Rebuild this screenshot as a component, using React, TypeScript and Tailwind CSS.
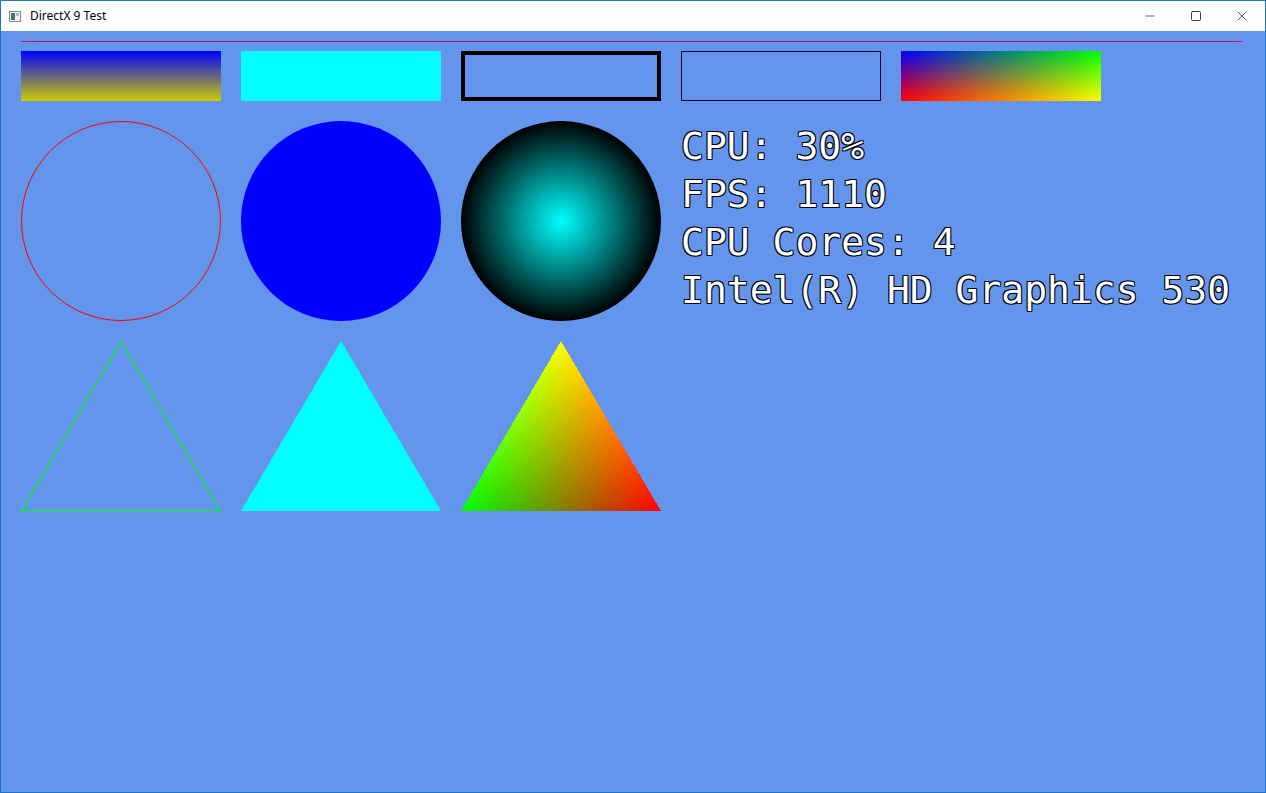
import { Minus, Square, X } from "lucide-react";

const stats = ["CPU: 30%", "FPS: 1110", "CPU Cores: 4", "Intel(R) HD Graphics 530"];

function AppIcon() {
  return (
    <svg width="12" height="11" viewBox="0 0 12 11">
      <rect x="0.5" y="0.5" width="11" height="10" fill="#f2f2f2" stroke="#8a8a8a" />
      <rect x="2" y="2" width="4" height="7" fill="#3d7a78" />
      <rect x="7" y="2" width="3" height="3" fill="#9fc3c0" />
    </svg>
  );
}

function TitleBar() {
  return (
    <div className="h-[30px] bg-white flex items-center shrink-0">
      <div className="ml-[8px] mr-[9px] flex items-center">
        <AppIcon />
      </div>
      <span className="text-[12px] text-black font-['Noto_Sans','Liberation_Sans',sans-serif]">
        DirectX 9 Test
      </span>
      <div className="ml-auto flex h-full">
        <div className="w-[46px] flex items-center justify-center">
          <Minus size={14} strokeWidth={1} color="#000" />
        </div>
        <div className="w-[46px] flex items-center justify-center">
          <Square size={12} strokeWidth={1.5} color="#000" />
        </div>
        <div className="w-[46px] flex items-center justify-center">
          <X size={16} strokeWidth={1} color="#000" />
        </div>
      </div>
    </div>
  );
}

function CornerGradientRect() {
  return (
    <svg width="200" height="50" viewBox="0 0 200 50">
      <defs>
        <linearGradient id="bottomRow" x1="0" y1="0" x2="1" y2="0">
          <stop offset="0" stopColor="#ff0000" />
          <stop offset="1" stopColor="#ffff00" />
        </linearGradient>
        <linearGradient id="topRow" x1="0" y1="0" x2="1" y2="0">
          <stop offset="0" stopColor="#0000ff" />
          <stop offset="1" stopColor="#00ff00" />
        </linearGradient>
        <linearGradient id="fade" x1="0" y1="0" x2="0" y2="1">
          <stop offset="0" stopColor="#fff" />
          <stop offset="1" stopColor="#000" />
        </linearGradient>
        <mask id="fadeMask">
          <rect width="200" height="50" fill="url(#fade)" />
        </mask>
      </defs>
      <rect width="200" height="50" fill="url(#bottomRow)" />
      <rect width="200" height="50" fill="url(#topRow)" mask="url(#fadeMask)" />
    </svg>
  );
}

function ColorTriangle() {
  return (
    <svg width="200" height="171" viewBox="0 0 200 171">
      <defs>
        <linearGradient id="redCh" gradientUnits="userSpaceOnUse" x1="0" y1="170" x2="148.59" y2="82.6">
          <stop offset="0" stopColor="#000" />
          <stop offset="1" stopColor="#ff0000" />
        </linearGradient>
        <linearGradient id="greenCh" gradientUnits="userSpaceOnUse" x1="200" y1="170" x2="51.41" y2="82.6">
          <stop offset="0" stopColor="#000" />
          <stop offset="1" stopColor="#00ff00" />
        </linearGradient>
      </defs>
      <g style={{ isolation: "isolate" }} shapeRendering="crispEdges">
        <polygon points="100,0 200,170 0,170" fill="url(#redCh)" />
        <polygon points="100,0 200,170 0,170" fill="url(#greenCh)" style={{ mixBlendMode: "screen" }} />
      </g>
    </svg>
  );
}

export default function App() {
  return (
    <div className="w-[1266px] h-[793px] border border-[#1a76c6] flex flex-col overflow-hidden">
      <TitleBar />

      <div className="flex-1 bg-[#6495ed] px-5 pt-[10px]">
        <div className="w-[1221px] h-px bg-[#c8103a]" />

        <div className="flex gap-5 mt-[9px]">
          <div className="w-[200px] h-[50px] bg-[linear-gradient(to_bottom,#0000ff,#cccc00)]" />
          <div className="w-[200px] h-[50px] bg-[#00ffff]" />
          <div className="w-[200px] h-[50px] border-4 border-black" />
          <div className="w-[200px] h-[50px] border border-[#00002a]" />
          <CornerGradientRect />
        </div>

        <div className="flex mt-5">
          <div className="flex flex-col gap-5">
            <div className="flex gap-5">
              <svg width="200" height="200" viewBox="0 0 200 200">
                <circle cx="100" cy="100" r="99.5" fill="none" stroke="#ff0000" strokeWidth="1" />
              </svg>
              <div className="w-[200px] h-[200px] rounded-full bg-[#0000ff]" />
              <div className="w-[200px] h-[200px] rounded-full bg-[radial-gradient(circle_closest-side,#00ffff_0%,#000000_100%)]" />
            </div>
            <div className="flex gap-5">
              <svg width="200" height="171" viewBox="0 0 200 171" shapeRendering="crispEdges">
                <polygon points="100,0.5 199.5,170.5 0.5,170.5" fill="none" stroke="#00ff00" strokeWidth="1" />
              </svg>
              <svg width="200" height="171" viewBox="0 0 200 171">
                <polygon points="100,0 200,170 0,170" fill="#00ffff" />
              </svg>
              <ColorTriangle />
            </div>
          </div>

          <div className="ml-5 pt-px font-['DejaVu_Sans_Mono',monospace] text-[38px] leading-[48px] text-white [text-shadow:-1px_-1px_0_#000,1px_-1px_0_#000,-1px_1px_0_#000,1px_1px_0_#000] whitespace-pre">
            {stats.map((line) => (
              <div key={line}>{line}</div>
            ))}
          </div>
        </div>
      </div>
    </div>
  );
}
